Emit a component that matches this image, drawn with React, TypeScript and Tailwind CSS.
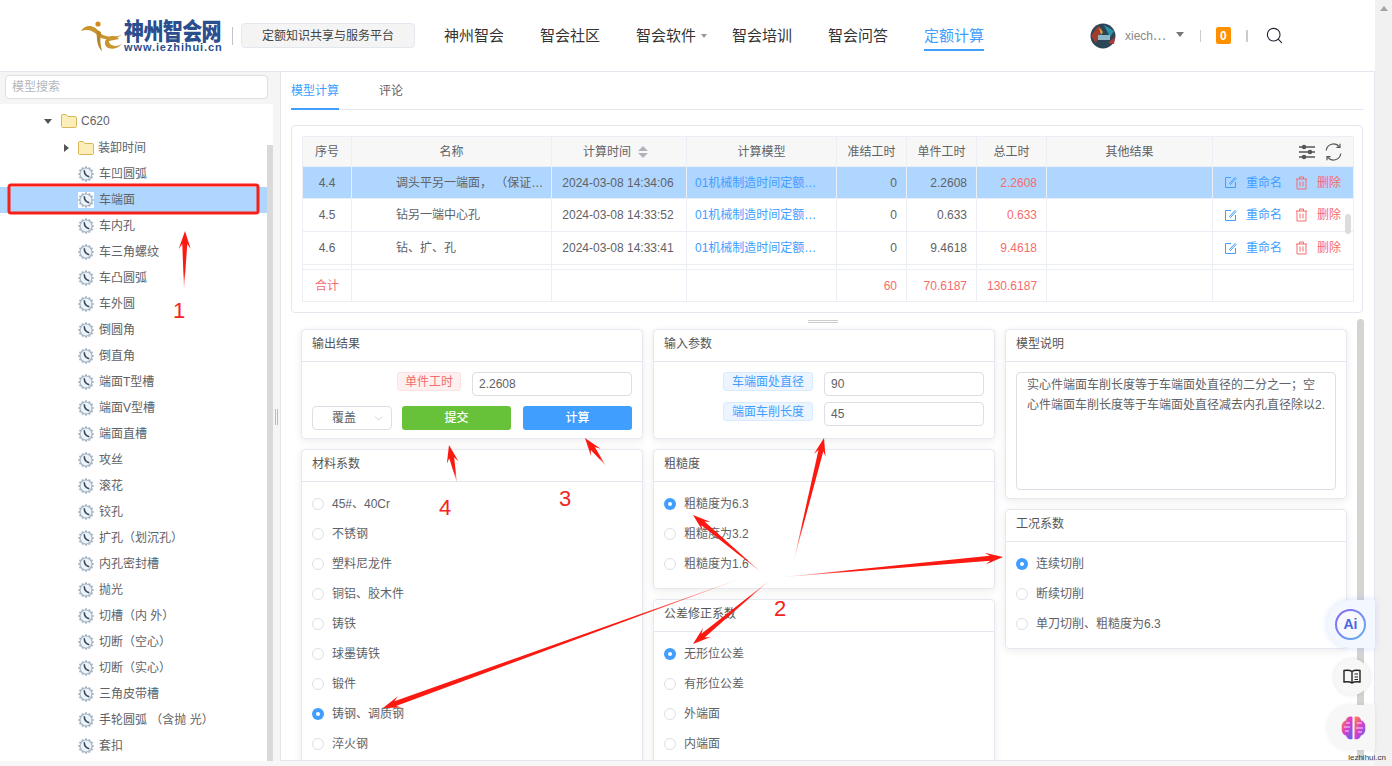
import React from "react";
import { ChevronDown, Search } from "lucide-react";

const FONT = "font-['Liberation_Sans','Noto_Sans_CJK_SC',sans-serif]";

const tree = ["车凹圆弧","车端面","车内孔","车三角螺纹","车凸圆弧","车外圆","倒圆角","倒直角","端面T型槽","端面V型槽","端面直槽","攻丝","滚花","铰孔","扩孔（划沉孔）","内孔密封槽","抛光","切槽（内 外）","切断（空心）","切断（实心）","三角皮带槽","手轮圆弧 （含抛 光）","套扣"];

function GearClock({ selected }: { selected?: boolean }) {
  const teeth = [0, 30, 60, 90, 120, 150, 180, 210, 240, 270, 300, 330];
  return (
    <svg width="16" height="16" viewBox="0 0 16 16" className={selected ? "bg-white" : ""}>
      {teeth.map((a) => (
        <rect key={a} x="7" y="0.4" width="2" height="2.4" fill="#9db0c0" transform={`rotate(${a} 8 8)`} />
      ))}
      <circle cx="8" cy="8" r="6" fill="#eef3f7" stroke="#a9b9c6" strokeWidth="1.2" />
      <path d="M6.300 4.300 C6.200 7.500 7.800 10 11.300 10.700" fill="none" stroke="#33475c" strokeWidth="1.500" />
    </svg>
  );
}

function Folder() {
  return (
    <svg width="16" height="14" viewBox="0 0 16 14">
      <path d="M0.5 12.500V1.700C0.500 1 1 .5 1.700 .5h3.400l1.700 2h7.500c.7 0 1.200.5 1.200 1.200v8.800c0 .5-.4 1-1 1H1.500c-.6 0-1-.5-1-1z" fill="#fbeeb8" stroke="#d9b65a" />
    </svg>
  );
}

function Sidebar() {
  return (
    <aside className="w-[273px] shrink-0 flex flex-col bg-white">
      <div className="px-[5px] pt-[3px] pb-[5px] bg-[#f5f5f5]">
        <div className="h-[24px] rounded border border-[#dcdfe6] bg-white pl-[6px] flex items-center text-[12px] text-[#b4b7bd]">模型搜索</div>
      </div>
      <div className="flex flex-1 min-h-0 overflow-hidden">
        <div className="flex-1 pt-[4px] text-[12px] text-[#606266]">
          <div className="h-[26px] flex items-center pl-[44px] gap-[9px]">
            <span className="w-0 h-0 border-x-[4px] border-x-transparent border-t-[5px] border-t-[#555]" />
            <Folder />
            <span className="-ml-[5px]">C620</span>
          </div>
          <div className="h-[27px] flex items-center pl-[64px] gap-[9px]">
            <span className="w-0 h-0 border-y-[4px] border-y-transparent border-l-[5px] border-l-[#555]" />
            <Folder />
            <span className="-ml-[5px]">装卸时间</span>
          </div>
          {tree.map((t, i) => (
            <div key={t} className={`h-[26px] flex items-center pl-[78px] gap-[5px] ${i === 1 ? "bg-[#afd6ff]" : ""}`}>
              <GearClock selected={i === 1} />
              <span>{t}</span>
            </div>
          ))}
        </div>
        <div className="w-[6px] shrink-0 flex flex-col">
          <div className="h-[41px]" />
          <div className="flex-1 bg-[#d9d9d9]" />
        </div>
      </div>
    </aside>
  );
}

function Header() {
  return (
    <header className="h-[72px] shrink-0 bg-white flex items-center border-b border-[#e4e7ed]">
      <div className="ml-[80px] flex items-center w-[144px]">
        <svg width="44" height="36" viewBox="0 0 44 36" className="shrink-0">
          <path d="M1 13 C6 5 15 7 20 15 C26 20 34 19 42 17 C34 22 24 23 18 18 C13 12 7 11 1 13z" fill="#c8952e" />
          <circle cx="18" cy="6" r="2.600" fill="#d48a1e" />
          <path d="M17 12 L21 14 C20 20 20 26 22 33 C18 30 16 22 17 12z" fill="#b9872a" />
          <path d="M25 24 C26 17 36 16 39 21 L29 23 C29 27 35 30 42 26 C36 33 24 32 25 24z" fill="#c8952e" />
        </svg>
        <div className="flex flex-col gap-[3px]">
          <span className="text-[20px] leading-[21px] font-black text-[#2b4f8e] tracking-[-0.6px] font-['Noto_Sans_CJK_SC',sans-serif] whitespace-nowrap scale-y-[1.2]">神州智会网</span>
          <span className="text-[11px] leading-[9px] font-bold text-[#2b4f8e] tracking-[0.9px] whitespace-nowrap">www.iezhihui.cn</span>
        </div>
      </div>
      <div className="w-px h-[18px] bg-[#c0c4cc] mx-[8px]" />
      <div className="w-[174px] h-[25px] rounded border border-[#e4e7ed] bg-[#f4f4f5] flex items-center justify-center text-[12px] text-[#444]">定额知识共享与服务平台</div>
      <nav className="flex items-center ml-[29px] pt-[1px] text-[15px] text-[#333] h-full">
        <span className="w-[96px]">神州智会</span>
        <span className="w-[96px]">智会社区</span>
        <span className="w-[96px] flex items-center">智会软件<span className="ml-[5px] w-0 h-0 border-x-[3.5px] border-x-transparent border-t-[4px] border-t-[#999]" /></span>
        <span className="w-[96px]">智会培训</span>
        <span className="w-[96px]">智会问答</span>
        <span className="text-[#409eff] h-[30px] leading-[22px] pt-[4px] border-b-2 border-[#409eff]">定额计算</span>
      </nav>
      <div className="ml-[106px] flex items-center">
        <svg width="26" height="26" viewBox="0 0 26 26">
          <circle cx="13" cy="13" r="12.500" fill="#2c4658" />
          <path d="M1 13 L8 3 L12 7 L6 20z" fill="#a33c2c" />
          <path d="M14 2 L24 8 L20 14z" fill="#2d93a8" />
          <path d="M18 20 L25 14 L24 21z" fill="#b23a30" />
          <rect x="8" y="12" width="12" height="5" fill="#8fb6c4" />
          <path d="M9 4 L13 9 L11 12z" fill="#e3a13c" />
        </svg>
        <span className="ml-[9px] text-[12px] text-[#888]">xiech⋯</span>
        <span className="ml-[10px] mb-[2px] w-0 h-0 border-x-[4px] border-x-transparent border-t-[5px] border-t-[#777]" />
        <div className="ml-[16px] w-px h-[12px] bg-[#ccc]" />
        <div className="ml-[15px] w-[15px] h-[17px] rounded-[2px] bg-[#ff9000] text-white text-[12px] font-bold flex items-center justify-center">0</div>
        <div className="ml-[15px] w-[2px] h-[12px] bg-[#ccc]" />
        <Search size={19} strokeWidth={1.400} className="ml-[17px] text-[#223]" />
      </div>
    </header>
  );
}

const EditIcon = () => (
  <svg width="13" height="13" viewBox="0 0 13 13" fill="none" stroke="#409eff" strokeWidth="1">
    <path d="M7 1.500H1.500V11.500H11.500V6" />
    <path d="M5.500 7.500 L11 1.500 L12 2.500 L6.500 8.500z" />
  </svg>
);
const TrashIcon = () => (
  <svg width="13" height="14" viewBox="0 0 13 14" fill="none" stroke="#f56c6c" strokeWidth="1">
    <path d="M1 3H12M4.500 3V1H8.500V3M2 3V13H11V3M5 5.500V10.500M8 5.500V10.500" />
  </svg>
);

const rows = [
  { no: "4.4", name: "调头平另一端面， （保证…", time: "2024-03-08 14:34:06", zhun: "0", dan: "2.2608", zong: "2.2608", sel: true, h: "h-[32px]" },
  { no: "4.5", name: "钻另一端中心孔", time: "2024-03-08 14:33:52", zhun: "0", dan: "0.633", zong: "0.633", h: "h-[33px]" },
  { no: "4.6", name: "钻、扩、孔", time: "2024-03-08 14:33:41", zhun: "0", dan: "9.4618", zong: "9.4618", h: "h-[33px]" },
];

const th = "border border-[#ebeef5] font-normal text-center !py-0";
const td = "border border-[#ebeef5] px-[10px] !py-0";

function DataTable() {
  return (
    <div className="mt-[15px] mr-[11px] h-[188px] rounded border border-[#e4e7ed] bg-white p-[10px] relative">
      <table className="table-fixed border-collapse w-[1051px] text-[12px] leading-[16px] text-[#606266]">
        <colgroup>
          <col className="w-[49px]" /><col className="w-[200px]" /><col className="w-[135px]" /><col className="w-[150px]" /><col className="w-[70px]" /><col className="w-[70px]" /><col className="w-[70px]" /><col className="w-[166px]" /><col className="w-[141px]" />
        </colgroup>
        <thead>
          <tr className="h-[30px] bg-[#f7f7f7]">
            <th className={th}>序号</th>
            <th className={th}>名称</th>
            <th className={`${th} !pr-[7px]`}>
              <span className="inline-flex items-center gap-[7px] align-middle">计算时间
                <span className="flex flex-col gap-[2px]">
                  <span className="w-0 h-0 border-x-[5px] border-x-transparent border-b-[5px] border-b-[#b0b3b9]" />
                  <span className="w-0 h-0 border-x-[5px] border-x-transparent border-t-[5px] border-t-[#b0b3b9]" />
                </span>
              </span>
            </th>
            <th className={th}>计算模型</th>
            <th className={th}>准结工时</th>
            <th className={th}>单件工时</th>
            <th className={th}>总工时</th>
            <th className={th}>其他结果</th>
            <th className={th}>
              <div className="flex items-center justify-end gap-[9px] pr-[11px] h-[18px]">
                <svg width="18" height="18" viewBox="0 0 18 18" stroke="#555" strokeWidth="1.300" fill="#555">
                  <path d="M1 4H17M1 9H17M1 14H17" />
                  <circle cx="6" cy="4" r="1.600" /><circle cx="12" cy="9" r="1.600" /><circle cx="6" cy="14" r="1.600" />
                </svg>
                <svg width="17" height="18" viewBox="0 0 17 18" fill="none" stroke="#555" strokeWidth="1.200">
                  <path d="M1.200 7.500A7.500 7.500 0 0 1 14.500 3.800M15.800 10.500A7.500 7.500 0 0 1 2.500 14.200" />
                  <path d="M15 .8V4.400H11.400M2 17.200V13.600H5.600" />
                </svg>
              </div>
            </th>
          </tr>
        </thead>
        <tbody>
          {rows.map((r) => (
            <tr key={r.no} className={`${r.h} ${r.sel ? "bg-[#afd6ff]" : ""}`}>
              <td className={`${td} text-center`}>{r.no}</td>
              <td className={`${td} pl-[44px] !pr-0 whitespace-nowrap overflow-hidden`}>{r.name}</td>
              <td className={`${td} whitespace-nowrap text-center !px-0 !pr-[2px]`}>{r.time}</td>
              <td className={`${td} !pl-[8px] !pr-0 text-[#409eff] whitespace-nowrap overflow-hidden`}>01机械制造时间定额…</td>
              <td className={`${td} text-right !pr-[9px]`}>{r.zhun}</td>
              <td className={`${td} text-right !pr-[9px]`}>{r.dan}</td>
              <td className={`${td} text-right !pr-[9px] text-[#f56c6c]`}>{r.zong}</td>
              <td className={td}></td>
              <td className={`${td} !px-0`}>
                <div className="flex items-center pl-[11px]">
                  <EditIcon />
                  <span className="ml-[9px] text-[#409eff]">重命名</span>
                  <span className="ml-[13px]"><TrashIcon /></span>
                  <span className="ml-[9px] text-[#f56c6c]">删除</span>
                </div>
              </td>
            </tr>
          ))}
          <tr className="h-[5px]">{Array.from({ length: 9 }).map((_, i) => <td key={i} className="border border-[#ebeef5] !p-0" />)}</tr>
          <tr className="h-[32px] text-[#f56c6c]">
            <td className={`${td} text-center !px-0`}>合计</td>
            <td className={td}></td><td className={td}></td><td className={td}></td>
            <td className={`${td} text-right !pr-[9px]`}>60</td>
            <td className={`${td} text-right !pr-[9px]`}>70.6187</td>
            <td className={`${td} text-right !pr-[9px]`}>130.6187</td>
            <td className={td}></td><td className={td}></td>
          </tr>
        </tbody>
      </table>
      <div className="absolute left-[1053px] top-[88px] w-[6px] h-[20px] rounded bg-[#dcdcdc]" />
    </div>
  );
}

function Card({ title, h, children }: { title: string; h?: string; children: React.ReactNode }) {
  return (
    <section className={`rounded border border-[#e6e8ef] bg-white shadow-[0_2px_8px_rgba(0,0,0,0.08)] shrink-0 ${h ?? ""}`}>
      <div className="h-[32px] border-b border-[#e4e7ed] flex items-center pl-[10px] pb-[3px] text-[12px] text-[#555]">{title}</div>
      {children}
    </section>
  );
}

function Radios({ items, on }: { items: string[]; on: number }) {
  return (
    <div className="pt-[7px] pl-[10px] text-[12px] text-[#606266]">
      {items.map((t, i) => (
        <div key={t} className="h-[30px] flex items-center gap-[8px]">
          {i === on ? (
            <span className="w-[12px] h-[12px] rounded-full bg-[#409eff] flex items-center justify-center"><span className="w-[4px] h-[4px] rounded-full bg-white" /></span>
          ) : (
            <span className="w-[12px] h-[12px] rounded-full border border-[#dcdfe6] bg-white" />
          )}
          <span>{t}</span>
        </div>
      ))}
    </div>
  );
}

function Tag({ color, children }: { color: "red" | "blue"; children: React.ReactNode }) {
  return (
    <span className={`h-[19px] rounded-[3px] border text-[12px] flex items-center ${color === "red" ? "px-[7px] bg-[#fef0f0] border-[#fde2e2] text-[#f56c6c]" : "px-[8px] bg-[#ecf5ff] border-[#d9ecff] text-[#409eff]"}`}>{children}</span>
  );
}

const Field = ({ v }: { v: string }) => (
  <div className="w-[160px] h-[24px] rounded border border-[#dcdfe6] bg-white flex items-center pl-[6px] text-[12px] text-[#606266]">{v}</div>
);

function Panels() {
  return (
    <div className="flex-1 min-h-0 flex overflow-hidden">
      <div className="flex gap-[10px] ml-[21px] pt-[10px] w-[1046px] shrink-0">
        <div className="w-[342px] flex flex-col gap-[10px] shrink-0">
          <Card title="输出结果" h="h-[110px]">
            <div className="pt-[10px] px-[10px]">
              <div className="flex justify-end items-start gap-[11px]">
                <Tag color="red">单件工时</Tag>
                <Field v="2.2608" />
              </div>
              <div className="mt-[10px] flex gap-[10px]">
                <div className="w-[80px] h-[24px] rounded border border-[#dcdfe6] flex items-center pl-[19px] text-[12px] text-[#606266] relative">覆盖<ChevronDown size={13} strokeWidth={1} className="absolute right-[6px] text-[#aaa]" /></div>
                <div className="w-[109px] h-[24px] rounded-[3px] bg-[#67c23a] text-white text-[12px] font-medium flex items-center justify-center">提交</div>
                <div className="w-[109px] ml-[2px] h-[24px] rounded-[3px] bg-[#409eff] text-white text-[12px] font-medium flex items-center justify-center">计算</div>
              </div>
            </div>
          </Card>
          <Card title="材料系数" h="h-[330px]"><Radios on={7} items={["45#、40Cr","不锈钢","塑料尼龙件","铜铝、胶木件","铸铁","球墨铸铁","锻件","铸钢、调质钢","淬火钢"]} /></Card>
        </div>
        <div className="w-[342px] flex flex-col gap-[10px] shrink-0">
          <Card title="输入参数" h="h-[110px]">
            <div className="pt-[10px] pr-[10px] flex flex-col gap-[6px]">
              <div className="flex justify-end gap-[11px]"><Tag color="blue">车端面处直径</Tag><Field v="90" /></div>
              <div className="flex justify-end gap-[11px]"><Tag color="blue">端面车削长度</Tag><Field v="45" /></div>
            </div>
          </Card>
          <Card title="粗糙度" h="h-[140px]"><Radios on={0} items={["粗糙度为6.3","粗糙度为3.2","粗糙度为1.6"]} /></Card>
          <Card title="公差修正系数" h="h-[200px]"><Radios on={0} items={["无形位公差","有形位公差","外端面","内端面"]} /></Card>
        </div>
        <div className="w-[342px] flex flex-col gap-[10px] shrink-0">
          <Card title="模型说明" h="h-[170px]">
            <div className="m-[10px] h-[118px] rounded border border-[#dcdfe6] px-[10px] py-[2px] text-[12px] leading-[20px] text-[#606266]">实心件端面车削长度等于车端面处直径的二分之一；空心件端面车削长度等于车端面处直径减去内孔直径除以2.</div>
          </Card>
          <Card title="工况系数" h="h-[140px]"><Radios on={0} items={["连续切削","断续切削","单刀切削、粗糙度为6.3"]} /></Card>
        </div>
      </div>
      <div className="ml-[10px] w-[7px] shrink-0 rounded-t bg-[#d4d4d4]" />
    </div>
  );
}

function Floating() {
  return (
    <>
      <div className="absolute left-[1327px] top-[600px] w-[48px] h-[48px] rounded-l-full bg-[#f3f7ff] shadow-[0_0_6px_rgba(100,140,255,0.25)] flex items-center pl-[8px]">
        <div className="w-[31px] h-[31px] rounded-full p-[2px] bg-[linear-gradient(135deg,#8a63ee,#5fb6f5)]">
          <div className="w-full h-full rounded-full bg-[#f7f9ff] text-[#4a66e0] text-[14px] font-bold flex items-center justify-center">Ai</div>
        </div>
      </div>
      <div className="absolute left-[1334px] top-[659px] w-[36px] h-[36px] rounded-full bg-[#f7f7f7] shadow-[0_0_4px_rgba(0,0,0,0.12)] flex items-center justify-center">
        <svg width="18" height="16" viewBox="0 0 18 16" fill="none" stroke="#222" strokeWidth="1.400">
          <path d="M9 2.500C7 1 4 1 1 1.500V13C4 12.500 7 12.500 9 14C11 12.500 14 12.500 17 13V1.500C14 1 11 1 9 2.500ZM9 2.500V14" />
          <path d="M11.500 5H15M11.500 8H15M11.500 10.500H15" strokeWidth="1.100" />
        </svg>
      </div>
      <div className="absolute left-[1327px] top-[705px] w-[48px] h-[45px] rounded-l-full bg-[#f7f7f7] shadow-[0_0_4px_rgba(0,0,0,0.08)] flex items-center pl-[14px]">
        <svg width="25" height="26" viewBox="0 0 25 26">
          <defs><linearGradient id="brain" x1="0" y1="0" x2="1" y2="1"><stop offset="0" stopColor="#ff8a3c" /><stop offset="0.5" stopColor="#d93bd0" /><stop offset="1" stopColor="#4b6cf0" /></linearGradient></defs>
          <path d="M11.500 2C8 .5 5 3 5 5.500 2 6 0 9.500 .8 13 0 17 2.500 20 5 20.500 6 24 9.500 25 11.500 24z" fill="url(#brain)" />
          <path d="M13.500 2C17 .5 20 3 20 5.500 23 6 25 9.500 24.200 13 25 17 22.500 20 20 20.500 19 24 15.500 25 13.500 24z" fill="url(#brain)" />
          <path d="M3 12H9M5 8L9 8M4 16L8 16M16 8H21M15 13H22M17 17H21" stroke="#fff" strokeWidth="0.800" />
        </svg>
      </div>
      <span className="absolute right-[5px] top-[753px] text-[8px] leading-[10px] text-[#333] px-[1px]">lezhihui.cn</span>
    </>
  );
}

function Wedge({ id, tip, tail, w = 5, hl = 18, hw = 6 }: { id: string; tip: [number, number]; tail: [number, number]; w?: number; hl?: number; hw?: number }) {
  const [x1, y1] = tip, [x2, y2] = tail;
  const dx = x2 - x1, dy = y2 - y1, l = Math.hypot(dx, dy);
  const ux = dx / l, uy = dy / l, nx = -uy, ny = ux;
  const b = [x1 + ux * hl, y1 + uy * hl], n = [x1 + ux * (hl - 5), y1 + uy * (hl - 5)];
  const pts = [
    [x1, y1], [b[0] + nx * hw, b[1] + ny * hw], [n[0] + nx * (w / 2), n[1] + ny * (w / 2)], [x2, y2],
    [n[0] - nx * (w / 2), n[1] - ny * (w / 2)], [b[0] - nx * hw, b[1] - ny * hw],
  ];
  return (
    <>
      <defs>
        <linearGradient id={id} gradientUnits="userSpaceOnUse" x1={x1} y1={y1} x2={x2} y2={y2}>
          <stop offset="0" stopColor="#fb1a12" />
          <stop offset="0.7" stopColor="#fb1a12" />
          <stop offset="1" stopColor="#fb1a12" stopOpacity="0.15" />
        </linearGradient>
      </defs>
      <polygon points={pts.map((p) => p.join(",")).join(" ")} fill={`url(#${id})`} />
    </>
  );
}

function Annotations() {
  const num = "absolute text-[22px] leading-[26px] text-[#f5241c] font-['Liberation_Sans',sans-serif]";
  return (
    <>
      <svg width="1392" height="766" className="absolute inset-0 pointer-events-none">
        <rect x="9" y="185" width="249" height="28" rx="2" fill="none" stroke="#f5201a" strokeWidth="3" />
        <Wedge id="a1" tip={[185, 231]} tail={[184, 290]} />
        <Wedge id="a2" tip={[449, 445]} tail={[457, 483]} />
        <Wedge id="a3" tip={[585, 438]} tail={[606, 466]} />
        <Wedge id="a4" tip={[693, 515]} tail={[762, 573]} />
        <Wedge id="a5" tip={[824, 438]} tail={[794, 560]} />
        <Wedge id="a6" tip={[1003, 557]} tail={[783, 577]} />
        <Wedge id="a7" tip={[693, 644]} tail={[770, 580]} />
        <Wedge id="a8" tip={[383, 708]} tail={[745, 577]} />
      </svg>
      <span className={`${num} left-[173px] top-[298px]`}>1</span>
      <span className={`${num} left-[439px] top-[495px]`}>4</span>
      <span className={`${num} left-[559px] top-[486px]`}>3</span>
      <span className={`${num} left-[774px] top-[596px]`}>2</span>
    </>
  );
}

export default function App() {
  return (
    <div className={`${FONT} relative w-[1392px] h-[766px] overflow-hidden flex bg-[#f7f7f7]`}>
      <div className="w-[1375px] shrink-0 flex flex-col">
        <Header />
        <div className="flex-1 min-h-0 flex mb-[5px]">
          <Sidebar />
          <div className="w-[7px] shrink-0 bg-[#f5f5f5] flex items-center justify-center">
            <span className="w-[3px] h-[16px] border-x border-[#bbb]" />
          </div>
          <main className="flex-1 min-w-0 bg-white border-l border-r border-b border-[#e4e7ed] flex flex-col pl-[10px]">
            <div className="h-[38px] shrink-0 mr-[10px] border-b border-[#e4e7ed] flex text-[12px] items-stretch">
              <span className="w-[48px] pt-[1px] border-b-2 border-[#409eff] -mb-px text-[#409eff] flex items-center justify-center">模型计算</span>
              <span className="ml-[40px] text-[#606266] flex items-center">评论</span>
            </div>
            <DataTable />
            <div className="h-[17px] shrink-0 flex items-center justify-center pr-[20px]">
              <span className="w-[30px] h-[3px] border-y border-[#ccc]" />
            </div>
            <div className="-ml-[11px] flex-1 min-h-0 flex flex-col -mt-[11px]">
              <Panels />
            </div>
          </main>
        </div>
      </div>
      <div className="w-[17px] shrink-0 bg-[#f1f1f1] flex justify-center pt-[6px]">
        <span className="w-0 h-0 border-x-[4px] border-x-transparent border-b-[5px] border-b-[#a3a3a3]" />
      </div>
      <Floating />
      <Annotations />
    </div>
  );
}
